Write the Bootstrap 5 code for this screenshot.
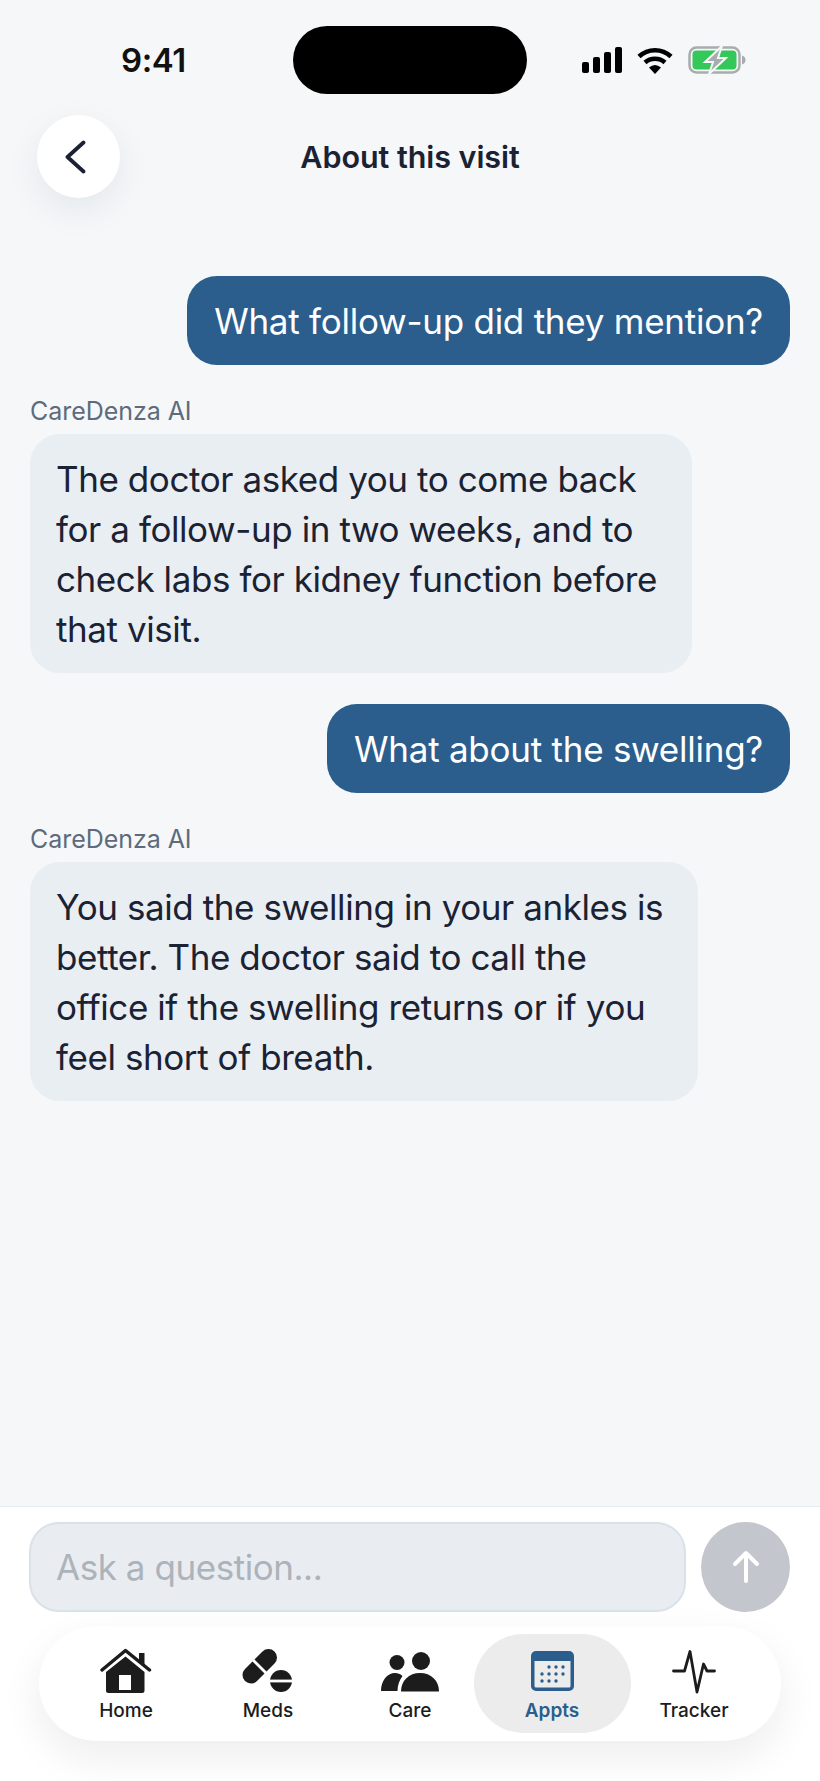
<!DOCTYPE html>
<html lang="en">
<head>
  <meta charset="UTF-8" />
  <meta name="viewport" content="width=device-width, initial-scale=1" />
  <title>About this visit - CareDenza</title>
  <link href="https://cdn.jsdelivr.net/npm/bootstrap@5.3.0/dist/css/bootstrap.min.css" rel="stylesheet" />
  <style>
    body { background: #f5f7f9; font-family: Inter, "Liberation Sans", sans-serif; color: #1a2233; }
    .phone { width: 820px; height: 1781px; overflow: hidden; }
    .status-row { height: 115px; padding: 26px 30px 0 121px; }
    .clock { width: 172px; font-size: 33px; font-weight: 600; letter-spacing: -.4px; color: #111; line-height: 68px; }
    .island { width: 234px; height: 68px; background: #000; border-radius: 34px; }
    .status-icons { margin-left: 55px; height: 68px; gap: 15px; }
    .top-row { height: 83px; padding: 0 37px; }
    .back-btn { width: 83px; height: 83px; background: #fff; border: 0; border-radius: 50%; box-shadow: 0 12px 36px rgba(20,30,50,.07); flex: none; padding: 0 6px 0 0; z-index: 1; }
    .page-title { font-size: 30.5px; font-weight: 600; letter-spacing: -.05px; margin: 0 0 0 -83px; line-height: 83px; color: #1a2233; }
    .chat { padding: 78px 30px 0; }
    .bubble { font-size: 35px; line-height: 50px; border-radius: 30px; }
    .from-user { background: #2b5e8c; color: #fff; letter-spacing: -.25px; padding: 20px 27px 19px; }
    .from-ai { background: #e9eef2; color: #1a2233; letter-spacing: -.42px; padding: 20px 35px 19px 26px; }
    .ai-name { font-size: 25px; letter-spacing: -.05px; line-height: 30px; color: #5d6b7c; margin: 31px 0 8px; }
    .gap-before { margin-top: 31px; }
    .ask-panel { background: #fff; border-top: 1px solid #e6ebf0; padding: 15px 30px 0 29px; height: 275px; }
    .ask-input { height: 90px; background: #e9edf1; border: 2px solid #d9e1e9; border-radius: 30px; font-size: 35px; letter-spacing: -.45px; padding: 0 25px; color: #1a2233; box-shadow: none; }
    .ask-input::placeholder { color: #adb3ba; }
    .send-btn { width: 89px; height: 90px; background: #c3c6cc; border: 0; border-radius: 50%; flex: none; margin-left: 15px; }
    .tabs { margin: 14px 9px 0 10px; height: 115px; background: #fff; border-radius: 58px; box-shadow: 0 16px 40px rgba(20,30,50,.08); }
    .tab { width: 142px; height: 99px; padding-top: 14px; border-radius: 50px; font-size: 19px; line-height: 22px; font-weight: 500; color: #1c1c1c; flex: none; }
    .tab-on { width: 157px; margin: 0 -7.5px; background: #ececec; color: #2b5e8c; font-weight: 600; }
    .tab svg { display: block; margin-bottom: 6px; }
  </style>
</head>
<body>
  <div class="phone d-flex flex-column">
    <div class="status-row d-flex align-items-start">
      <div class="clock">9:41</div>
      <div class="island"></div>
      <div class="status-icons d-flex align-items-center">
        <svg width="40" height="26" viewBox="0 0 40 26"><g fill="#000"><rect x="0" y="15" width="7" height="11" rx="2"/><rect x="11" y="10" width="7" height="16" rx="2"/><rect x="22" y="5" width="7" height="21" rx="2"/><rect x="33" y="0" width="7" height="26" rx="2"/></g></svg>
        <svg width="36" height="27" viewBox="0 0 36 27"><g fill="none" stroke="#000" stroke-width="4.5"><path d="M2 9.500C11 1 25 1 34 9.500"/><path d="M8 15.500C13.500 10.500 22.500 10.500 28 15.500"/></g><path d="M12 20.500Q18 15.500 24 20.500L18 27Z" fill="#000"/></svg>
        <svg width="58" height="28" viewBox="0 0 58 28"><rect x="1.500" y="1.500" width="50" height="25" rx="7" fill="none" stroke="#a9acae" stroke-width="2.500"/><rect x="4.500" y="4.500" width="44" height="19" rx="4" fill="#34c759"/><path d="M54 9.500c2.500.8 3.500 2.500 3.500 4.500s-1 3.700-3.500 4.500z" fill="#a9acae"/><path d="M34 0 17 16h8l-4 12 17-16h-8z" fill="#a9acae" stroke="#f5f7f9" stroke-width="2"/></svg>
      </div>
    </div>

    <div class="top-row d-flex align-items-center">
      <button class="back-btn d-flex align-items-center justify-content-center" type="button" aria-label="Back">
        <svg width="21" height="34" viewBox="0 0 21 34"><path d="M18.500 2.500 2.500 17l16 14.500" fill="none" stroke="#1a2233" stroke-width="3.800" stroke-linecap="round" stroke-linejoin="round"/></svg>
      </button>
      <h1 class="page-title flex-grow-1 text-center">About this visit</h1>
    </div>

    <div class="chat flex-grow-1 d-flex flex-column">
      <div class="bubble from-user align-self-end">What follow-up did they mention?</div>
      <div class="ai-name">CareDenza AI</div>
      <div class="bubble from-ai align-self-start">The doctor asked you to come back<br>for a follow-up in two weeks, and to<br>check labs for kidney function before<br>that visit.</div>
      <div class="bubble from-user align-self-end gap-before">What about the swelling?</div>
      <div class="ai-name">CareDenza AI</div>
      <div class="bubble from-ai align-self-start">You said the swelling in your ankles is<br>better. The doctor said to call the<br>office if the swelling returns or if you<br>feel short of breath.</div>
    </div>

    <div class="ask-panel">
      <div class="d-flex align-items-center">
        <input class="form-control ask-input" type="text" placeholder="Ask a question..." />
        <button class="send-btn d-flex align-items-center justify-content-center" type="button" aria-label="Send">
          <svg width="30" height="34" viewBox="0 0 30 34"><path d="M15 31V4M4 14 15 3l11 11" fill="none" stroke="#fff" stroke-width="4" stroke-linecap="round" stroke-linejoin="round"/></svg>
        </button>
      </div>
      <nav class="tabs d-flex align-items-center justify-content-center">
        <div class="tab d-flex flex-column align-items-center">
          <svg width="52" height="46" viewBox="0 0 52 46"><path d="M2 22 25.500 2.500 49.500 22" fill="none" stroke="#1c1c1c" stroke-width="3.500" stroke-linecap="round" stroke-linejoin="round"/><path d="M39 5h5.500v12L39 12.500z" fill="#1c1c1c"/><path fill-rule="evenodd" d="M25.500 8.500 44.500 24v18.500a2.500 2.500 0 0 1-2.500 2.500H8.500a2.500 2.500 0 0 1-2.500-2.500V24zM19 27v15h12V27z" fill="#1c1c1c"/></svg>
          <span>Home</span>
        </div>
        <div class="tab d-flex flex-column align-items-center">
          <svg width="52" height="46" viewBox="0 0 52 46"><path d="M9 27 26.500 9.500" stroke="#1c1c1c" stroke-width="17" stroke-linecap="round"/><path d="M8.500 9.500 27 28" stroke="#fff" stroke-width="2.800"/><circle cx="39" cy="33" r="11" fill="#1c1c1c"/><rect x="26" y="31.600" width="26" height="2.800" fill="#fff"/></svg>
          <span>Meds</span>
        </div>
        <div class="tab d-flex flex-column align-items-center">
          <svg width="58" height="46" viewBox="0 0 58 46"><g fill="#1c1c1c"><circle cx="16" cy="14.500" r="7.500"/><circle cx="40" cy="13" r="9"/><path d="M0 43c0-10 6-18 14-18 3 0 5 .8 7.500 3-3 4-5 9-5 15z"/><path d="M20 43.500c0-11 8-18.500 19-18.500s19 7.500 19 18.500z"/></g></svg>
          <span>Care</span>
        </div>
        <div class="tab tab-on d-flex flex-column align-items-center">
          <svg width="43" height="46" viewBox="0 0 43 46"><g transform="translate(0 3)"><path fill-rule="evenodd" d="M5 0h33a5 5 0 0 1 5 5v30a5 5 0 0 1-5 5H5a5 5 0 0 1-5-5V5a5 5 0 0 1 5-5zM3.500 10v25A1.500 1.500 0 0 0 5 36.500h33a1.500 1.500 0 0 0 1.500-1.500V10z" fill="#2b5e8c"/><g fill="#2b5e8c"><circle cx="18" cy="16" r="1.700"/><circle cx="25" cy="16" r="1.700"/><circle cx="32" cy="16" r="1.700"/><circle cx="11" cy="23" r="1.700"/><circle cx="18" cy="23" r="1.700"/><circle cx="25" cy="23" r="1.700"/><circle cx="32" cy="23" r="1.700"/><circle cx="11" cy="30" r="1.700"/><circle cx="18" cy="30" r="1.700"/><circle cx="25" cy="30" r="1.700"/></g></g></svg>
          <span>Appts</span>
        </div>
        <div class="tab d-flex flex-column align-items-center">
          <svg width="44" height="46" viewBox="0 0 44 46"><path d="M1.500 23h11L18 3.500 25 44l6.500-28 3.500 7h7.500" fill="none" stroke="#1c1c1c" stroke-width="2.800" stroke-linecap="round" stroke-linejoin="round"/></svg>
          <span>Tracker</span>
        </div>
      </nav>
    </div>
  </div>
  <script src="https://cdn.jsdelivr.net/npm/bootstrap@5.3.0/dist/js/bootstrap.bundle.min.js"></script>
</body>
</html>
